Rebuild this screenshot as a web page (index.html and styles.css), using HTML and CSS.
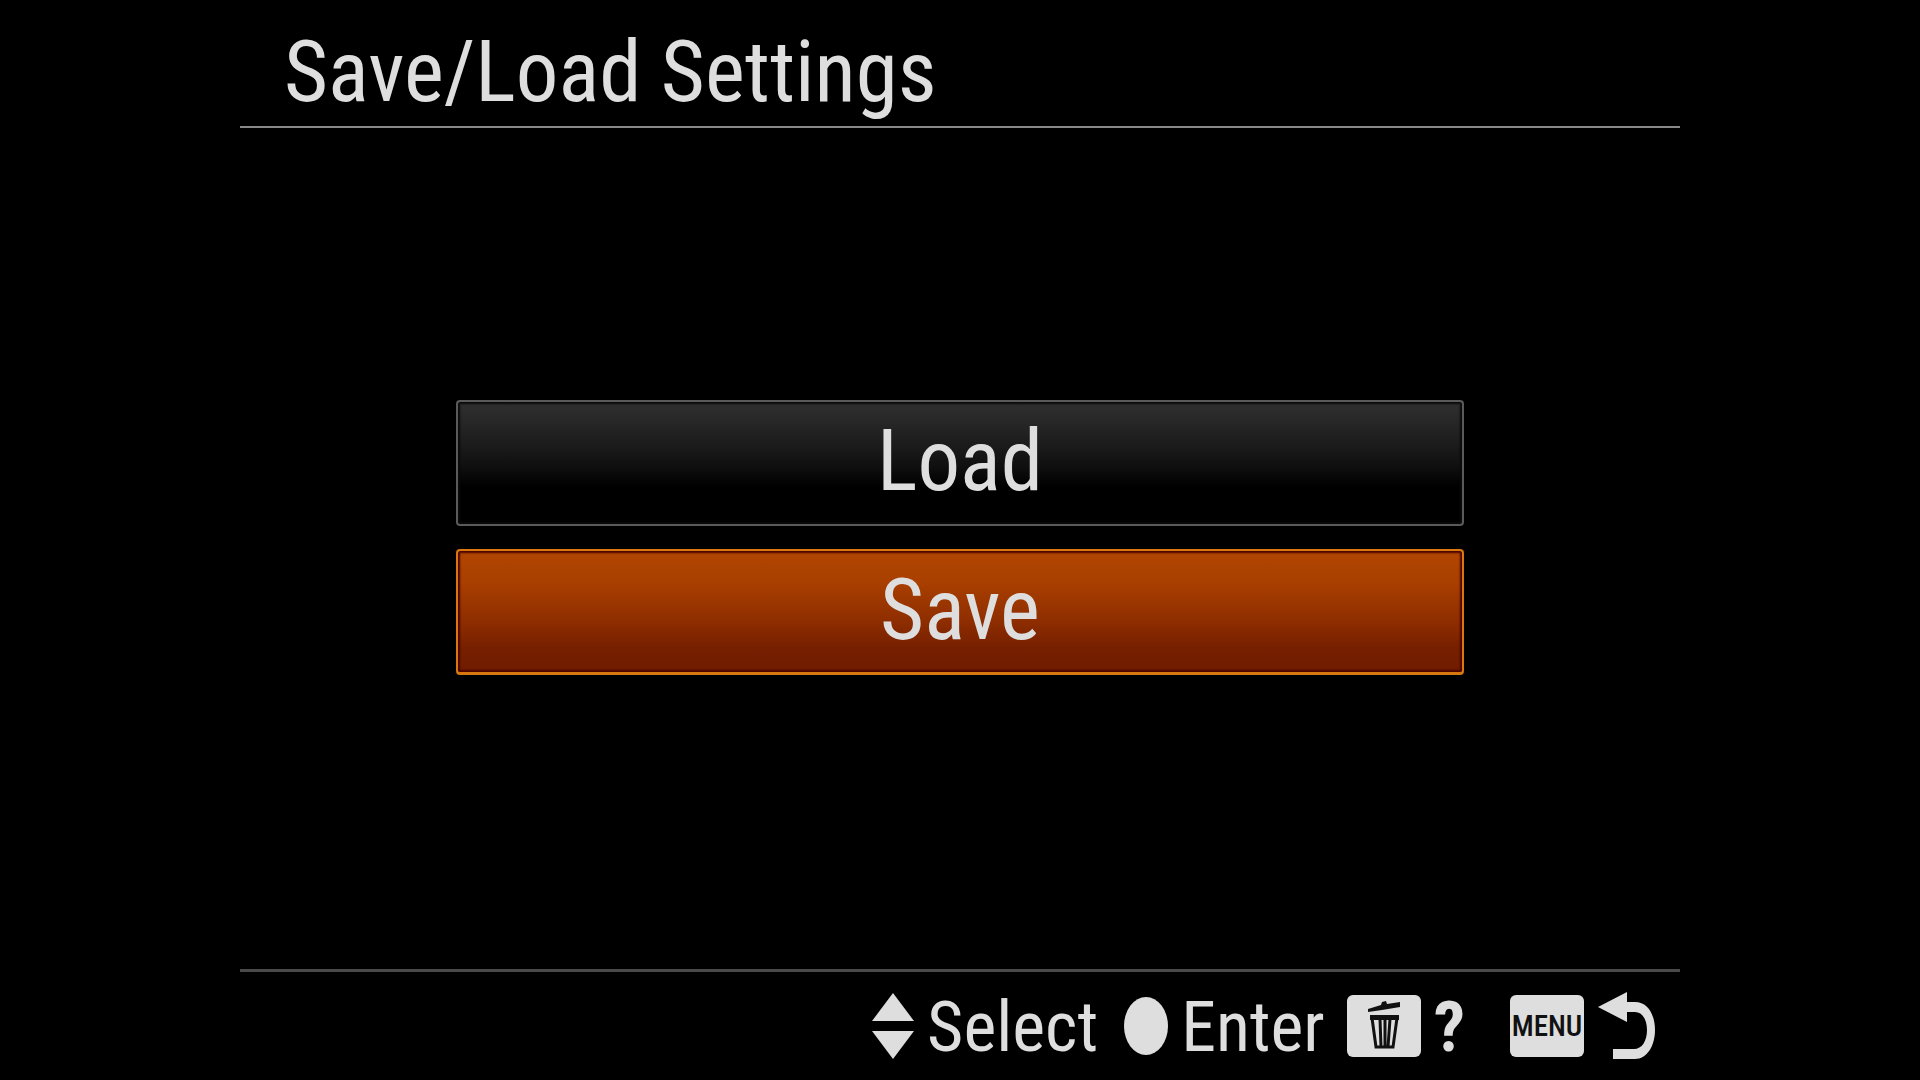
FILE: index.html
```html
<!DOCTYPE html>
<html lang="en">
<head>
<meta charset="utf-8">
<meta name="viewport" content="width=device-width, initial-scale=1">
<title>Save/Load Settings</title>
<link rel="stylesheet" href="styles.css">
</head>
<body>
<div class="screen">
  <header class="title-bar">
    <h1 class="title">Save/Load Settings</h1>
  </header>
  <main class="options">
    <button type="button" class="option">Load</button>
    <button type="button" class="option option-selected">Save</button>
  </main>
  <footer class="key-guide">
    <div class="hint hint-select">
      <svg class="arrows" viewBox="0 0 42 66" aria-hidden="true"><path d="M21 0 42 28H0ZM0 38H42L21 66Z"/></svg>
      <span class="label">Select</span>
    </div>
    <div class="hint hint-enter">
      <svg class="dot" viewBox="0 0 44 58" aria-hidden="true"><ellipse cx="22" cy="29" rx="22" ry="29"/></svg>
      <span class="label">Enter</span>
    </div>
    <div class="hint hint-help">
      <span class="key">
        <svg class="trash" viewBox="0 0 32 50" aria-hidden="true">
          <path d="M0 8 13 4 14 1 18 0 19 3 32 1V6L14 9 0 11ZM2 14H31V19H2Z"/>
          <path class="trash-body" d="M4 17 8 46H25L29 17M12 18 13 46M17 18V46M22 18 20 46"/>
        </svg>
      </span>
      <span class="label question">?</span>
    </div>
    <div class="hint hint-back">
      <span class="key">MENU</span>
      <svg class="return" viewBox="0 0 58 68" aria-hidden="true">
        <path d="M0 15 29 0V10H37C50 10 57 23 57 38C57 54 49 67 37 67H15V57H36C44 57 49 49 49 38C49 27 44 20 37 20H29V30Z"/>
      </svg>
    </div>
  </footer>
</div>
</body>
</html>
```
FILE: styles.css
```css
* {
  box-sizing: border-box;
}

body {
  margin: 0;
  background: #000;
  color: #dedede;
  font-family: "Roboto Condensed", Roboto, "Liberation Sans", sans-serif;
}

.screen {
  display: flex;
  flex-direction: column;
  width: 75%;
  min-height: 100vh;
  margin: 0 auto;
}

.title-bar {
  padding: 22px 44px 4px;
  border-bottom: 2px solid #888;
}

.title {
  margin: 0;
  font-size: 85px;
  font-weight: 400;
  line-height: 100px;
}

.options {
  display: flex;
  flex: 1;
  flex-direction: column;
  align-items: center;
  justify-content: center;
  gap: 23px;
  padding-bottom: 22px;
}

.option {
  width: 70%;
  height: 126px;
  padding: 0 0 4px;
  border: 2px solid #5a5a5a;
  border-radius: 4px;
  background: linear-gradient(#303030 0%, #202020 28%, #101010 52%, #000 70%);
  box-shadow: inset 0 0 2px 2px #0a0a0a;
  color: inherit;
  font: inherit;
  font-size: 85px;
  line-height: 100px;
}

.option-selected {
  border-color: #d9780f;
  border-bottom-width: 3px;
  background: linear-gradient(#b04600 0%, #aa4000 25%, #8c2c00 60%, #762000 80%, #701c00 100%);
  box-shadow: inset 0 0 2px 2px #4c0400;
}

.key-guide {
  display: flex;
  align-items: center;
  justify-content: flex-end;
  height: 111px;
  padding-right: 24px;
  border-top: 3px solid #4a4a4a;
}

.hint {
  display: flex;
  align-items: center;
}

.hint-select,
.hint-enter {
  gap: 13px;
}

.hint-select {
  margin-right: 26px;
}

.hint-enter {
  margin-right: 22px;
}

.hint-help {
  gap: 13px;
  margin-right: 45px;
}

.hint-back {
  gap: 14px;
}

.label {
  padding-top: 2px;
  font-size: 70px;
  line-height: 84px;
}

.question {
  font-weight: 700;
}

.key {
  display: flex;
  align-items: center;
  justify-content: center;
  width: 74px;
  height: 62px;
  border-radius: 6px;
  background: #dedede;
  color: #111;
  font-size: 29px;
  font-weight: 500;
}

svg {
  display: block;
  flex: none;
  fill: #dedede;
}

.arrows {
  width: 42px;
  height: 66px;
}

.dot {
  width: 44px;
  height: 58px;
}

.trash {
  width: 32px;
  height: 50px;
  fill: #111;
}

.trash-body {
  fill: none;
  stroke: #111;
  stroke-width: 3;
}

.return {
  width: 58px;
  height: 68px;
}
```
